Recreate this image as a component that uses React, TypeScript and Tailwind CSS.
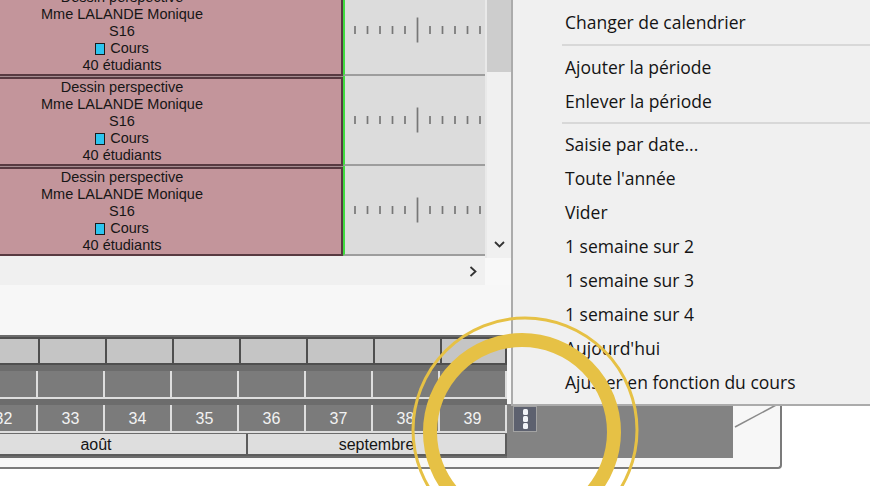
import React from "react";

function Ruler() {
  const ticks = Array.from({ length: 11 }, (_, i) => i);
  return (
    <svg width="140" height="26" viewBox="0 0 140 26" className="block">
      {ticks.map((i) => {
        const x = 10 + i * 12.5;
        const big = i === 5;
        return (
          <line
            key={i}
            x1={x}
            x2={x}
            y1={big ? 0.5 : 9}
            y2={big ? 25.5 : 17}
            stroke="#777777"
            strokeWidth={1.7}
          />
        );
      })}
    </svg>
  );
}

function GridRow() {
  return (
    <div className="flex h-[90px]">
      <div className="w-[343px] pt-px bg-[#a38c90] flex flex-col">
        <div className="flex-1 bg-[#c3959b] border-y-2 border-r-2 border-[#583a41] flex flex-col justify-center">
          <div className="w-[244px] text-center text-[14.5px] leading-[17px] text-[#161616] font-['Liberation_Sans',Arial,sans-serif]">
            <div>Dessin perspective</div>
            <div>Mme LALANDE Monique</div>
            <div>S16</div>
            <div className="flex items-center justify-center gap-[5px]">
              <span className="inline-block w-[10px] h-[12px] bg-[#2cc4ef] border border-[#1b1b1b]" />
              <span>Cours</span>
            </div>
            <div>40 étudiants</div>
          </div>
        </div>
      </div>
      <div className="flex-1 bg-[#dcdcdc] border-l-2 border-l-[#40dc40] border-b-2 border-b-[#9d9d9d] flex items-center">
        <Ruler />
      </div>
    </div>
  );
}

const weeks = ["32", "33", "34", "35", "36", "37", "38", "39"];

const menuItems: (string | null)[] = [
  "Changer de calendrier",
  null,
  "Ajouter la période",
  "Enlever la période",
  null,
  "Saisie par date...",
  "Toute l'année",
  "Vider",
  "1 semaine sur 2",
  "1 semaine sur 3",
  "1 semaine sur 4",
  "Aujourd'hui",
  "Ajuster en fonction du cours",
];

export default function App() {
  let sepCount = 0;
  return (
    <div className="relative w-[870px] h-[486px] overflow-hidden bg-white">
      {/* Main panel */}
      <div className="w-[782px] h-[469px] bg-[#f7f7f7] border-r-2 border-b-2 border-[#7b7b7b] rounded-br-[4px] flex flex-col">
        {/* Top: grid + scrollbars */}
        <div className="flex h-[285px]">
          <div className="w-[512px] flex flex-col">
            <div className="flex h-[258px]">
              <div className="w-[485px] h-[258px] overflow-hidden bg-[#f0f0f0]">
                <div className="-mt-[14px]">
                  <GridRow />
                  <GridRow />
                  <GridRow />
                </div>
              </div>
              <div className="w-[27px] bg-[#f0f0f0] border-l-2 border-[#e9e9e9] flex flex-col">
                <div className="h-[72px] mr-px bg-[#cdcdcd]" />
                <div className="flex-1" />
                <div className="h-[24px] mb-[2px] flex items-center justify-center">
                  <svg width="11" height="7" viewBox="0 0 11 7">
                    <path d="M1 1 L5.5 5.5 L10 1" fill="none" stroke="#333" strokeWidth="1.8" />
                  </svg>
                </div>
              </div>
            </div>
            <div className="flex h-[27px]">
              <div className="w-[485px] bg-[#f0f0f0] flex items-center justify-end pr-[8px]">
                <svg width="8" height="11" viewBox="0 0 8 11">
                  <path d="M1.5 1 L6.5 5.5 L1.5 10" fill="none" stroke="#333" strokeWidth="1.8" />
                </svg>
              </div>
              <div className="w-[27px] bg-[#f8f8f8]" />
            </div>
          </div>
          <div className="flex-1" />
        </div>

        <div className="h-[50px]" />

        {/* Timeline band */}
        <div className="flex h-[123px]">
          <div className="w-[507px] bg-[#6c6c6c] pt-[2px] flex flex-col overflow-hidden font-['Liberation_Sans',Arial,sans-serif]">
            <div className="h-[28px] flex -ml-[29px]">
              {weeks.map((w, i) => (
                <div
                  key={w}
                  className={`w-[67px] shrink-0 bg-[#c5c5c5] border-l-2 border-y-2 border-[#4f4f4f] ${i === 7 ? "border-r-2" : ""}`}
                />
              ))}
            </div>
            <div className="h-[6px]" />
            <div className="h-[28px] flex -ml-[29px]">
              {weeks.map((w) => (
                <div key={w} className="w-[67px] shrink-0 bg-[#7b7b7b] border-r-2 border-b-2 border-[#dedede]" />
              ))}
            </div>
            <div className="h-[6px]" />
            <div className="h-[28px] flex -ml-[29px]">
              {weeks.map((w) => (
                <div
                  key={w}
                  className="w-[67px] shrink-0 bg-[#7b7b7b] border-r-2 border-b-2 border-[#dedede] flex items-center justify-center pt-[2px] text-[16px] text-[#f2f2f2]"
                >
                  {w}
                </div>
              ))}
            </div>
            <div className="h-px" />
            <div className="h-[22px] flex text-[16px] text-[#151515]">
              <div className="w-[248px] shrink-0 bg-[#dedede] border-r-2 border-b-2 border-[#5c5c5c] pr-[54px] pt-px flex items-center justify-center">
                août
              </div>
              <div className="w-[259px] shrink-0 bg-[#dedede] border-r-2 border-b-2 border-[#5c5c5c] pt-px flex items-center justify-center">
                septembre
              </div>
            </div>
          </div>
          <div className="w-[226px] flex flex-col">
            <div className="h-[69px]" />
            <div className="h-[54px] bg-[#838383]">
              <div className="ml-[6px] mt-[2px] w-[24px] h-[26px] bg-[#5d616f] border border-[#a3a3a3] flex flex-col items-center justify-center gap-[1px]">
                <div className="w-[5px] h-[6px] bg-[#f2f4f8] rounded-[1.5px]" />
                <div className="w-[5px] h-[6px] bg-[#f2f4f8] rounded-[1.5px]" />
                <div className="w-[5px] h-[6px] bg-[#f2f4f8] rounded-[1.5px]" />
              </div>
            </div>
          </div>
          <div className="w-[47px]">
            <svg width="47" height="123" viewBox="0 0 47 123" className="block">
              <line x1="2" y1="92" x2="45" y2="69" stroke="#8a8a8a" strokeWidth="1.5" />
            </svg>
          </div>
        </div>
      </div>

      {/* Context menu */}
      <div className="absolute top-0 left-[511px] w-[359px] h-[406px] bg-[#f0f0f0] border-l-2 border-b-2 border-[#ababab] pt-[5px] font-['Open_Sans','Noto_Sans',sans-serif] text-[17.5px] text-[#141414]">
        {menuItems.map((item, idx) => {
          if (item === null) {
            sepCount += 1;
            return (
              <div key={idx} className={`${sepCount === 1 ? "h-[11px]" : "h-[9px]"} flex items-center pl-[49px]`}>
                <div className="h-[2px] w-full bg-[#d8d8d8]" />
              </div>
            );
          }
          return (
            <div key={idx} className="h-[34px] flex items-center pl-[52px] pt-px whitespace-nowrap">
              {item}
            </div>
          );
        })}
      </div>

      {/* Highlight rings */}
      <svg
        className="absolute inset-0 pointer-events-none"
        width="870"
        height="486"
        viewBox="0 0 870 486"
      >
        <circle cx="525" cy="430" r="112" fill="none" stroke="#e6c145" strokeWidth="3" />
        <circle cx="522" cy="432" r="92" fill="none" stroke="#e6c145" strokeWidth="14" />
      </svg>
    </div>
  );
}
